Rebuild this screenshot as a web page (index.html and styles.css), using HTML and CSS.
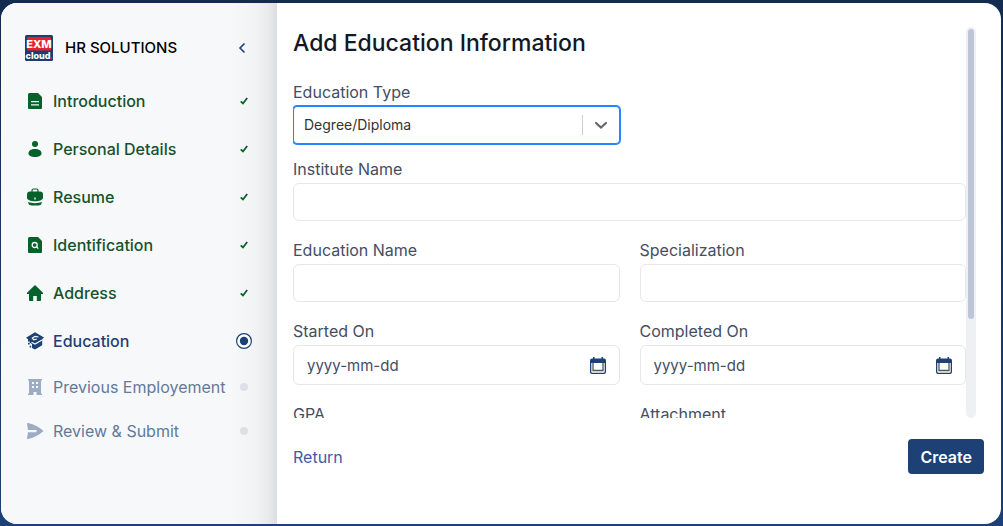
FILE: index.html
```html
<!DOCTYPE html>
<html lang="en">
<head>
  <meta charset="UTF-8">
  <meta name="viewport" content="width=device-width, initial-scale=1.0">
  <title>HR Solutions</title>
  <link rel="stylesheet" href="styles.css">
</head>
<body>
  <div class="card">
    <aside class="sidebar">
      <div class="brand">
        <svg class="logo" viewBox="0 0 28 26" role="img" aria-label="EXM cloud">
          <rect width="28" height="26" rx="1.5" fill="#1d3d6e"/>
          <rect x="2" y="2" width="24" height="13.5" rx="1" fill="#e8202e"/>
          <text x="14" y="13" class="logo-top">EXM</text>
          <text x="13" y="23.5" class="logo-bottom">cloud</text>
          <circle cx="26" cy="23" r="1" fill="#e8202e"/>
        </svg>
        <span class="brand-name">HR SOLUTIONS</span>
        <button class="collapse" type="button" aria-label="Collapse menu">
          <svg width="8" height="12" viewBox="0 0 8 12"><path d="M6.500 1.500 2 6l4.500 4.500" fill="none" stroke="currentColor" stroke-width="1.600"/></svg>
        </button>
      </div>

      <nav class="steps">
        <a class="step done" href="#">
          <svg class="icon" viewBox="0 0 16 16"><path fill="currentColor" fill-rule="evenodd" d="M2.500 0H11l4 4v11a1 1 0 0 1-1 1H2a1 1 0 0 1-1-1V1.500A1.500 1.500 0 0 1 2.500 0ZM4 8v1.300h8V8Zm0 3.200v1.300h8v-1.300Z"/></svg>
          <span>Introduction</span>
          <svg class="check" viewBox="0 0 8 8"><path d="M.8 4.300 3 6.500 7.200 1"/></svg>
        </a>
        <a class="step done" href="#">
          <svg class="icon" viewBox="0 0 16 16"><g fill="currentColor"><circle cx="8" cy="3" r="3"/><path d="M1.500 12.200C1.500 9.600 4.200 8 8 8s6.500 1.600 6.500 4.200S11.800 16 8 16s-6.500-1.200-6.500-3.800Z"/></g></svg>
          <span>Personal Details</span>
          <svg class="check" viewBox="0 0 8 8"><path d="M.8 4.300 3 6.500 7.200 1"/></svg>
        </a>
        <a class="step done" href="#">
          <svg class="icon" viewBox="0 0 16 16"><path d="M5 3V1.500Q5 0 6.500 0h3Q11 0 11 1.500V3" fill="none" stroke="currentColor" stroke-width="1.200"/><path fill="currentColor" fill-rule="evenodd" d="M3 2.500h10a3 3 0 0 1 3 3v3c0 2.500-3.500 3.700-8 3.700S0 11 0 8.500v-3a3 3 0 0 1 3-3Zm4.300 6v2h1.400v-2Z"/><path fill="currentColor" d="M1 13c4 1.500 10 1.500 14 0-.3 2.500-1.500 3.500-4 3.500H5C2.500 16.500 1.300 15.500 1 13Z"/></svg>
          <span>Resume</span>
          <svg class="check" viewBox="0 0 8 8"><path d="M.8 4.300 3 6.500 7.200 1"/></svg>
        </a>
        <a class="step done" href="#">
          <svg class="icon" viewBox="0 0 16 16"><path fill="currentColor" d="M2.500 0H11l4 4v11a1 1 0 0 1-1 1H2a1 1 0 0 1-1-1V1.500A1.500 1.500 0 0 1 2.500 0Z"/><g fill="none" stroke="#f7f8fa" stroke-width="1.300"><circle cx="7.700" cy="8" r="2.500"/><path d="m9.500 9.800 1.800 1.800"/></g></svg>
          <span>Identification</span>
          <svg class="check" viewBox="0 0 8 8"><path d="M.8 4.300 3 6.500 7.200 1"/></svg>
        </a>
        <a class="step done" href="#">
          <svg class="icon" viewBox="0 0 16 16"><path fill="currentColor" d="M8 0 16 7.800V9h-2v6.200a.8.8 0 0 1-.8.8H9.800v-5H6.200v5H2.800a.8.8 0 0 1-.8-.8V9H0V7.800Z"/></svg>
          <span>Address</span>
          <svg class="check" viewBox="0 0 8 8"><path d="M.8 4.300 3 6.500 7.200 1"/></svg>
        </a>
        <a class="step active" href="#" aria-current="step">
          <svg class="icon icon-wide" viewBox="0 0 18 18"><path fill="currentColor" d="M9 .3 18 5.500 16.200 7v6.300L9 17.500 6 16v-4L3.800 10.800V9.500H2V7.200L0 5.800Z"/><path d="M12.500 5 9 4.300 6.300 6.200l1.500 1.600 3-.8M5.500 10.300 9 12l7-4" fill="none" stroke="#f7f8fa" stroke-width="1.200"/><path d="M2 10.800h1.700v1.700H2Zm1.700 3h1.500v1.700H3.700Z" fill="currentColor"/></svg>
          <span>Education</span>
          <svg class="radio" viewBox="0 0 16 16"><circle cx="8" cy="8" r="7.400" fill="#fff" stroke="currentColor" stroke-width="1.200"/><circle cx="8" cy="8" r="4.200" fill="currentColor"/></svg>
        </a>
        <a class="step" href="#">
          <svg class="icon" viewBox="0 0 16 16"><path fill="currentColor" fill-rule="evenodd" d="M1 0h14v1.500h-1v13h1V16H9.500v-3h-3v3H1v-1.500h1v-13H1ZM5 3v2h2V3Zm4 0v2h2V3ZM5 7v2h2V7Zm4 0v2h2V7Z"/></svg>
          <span>Previous Employement</span>
          <i class="dot"></i>
        </a>
        <a class="step" href="#">
          <svg class="icon" viewBox="0 0 16 16"><path fill="currentColor" d="M0 .8Q0-.2 1.200.1 10 2 16.500 8 10 14 1.200 15.900 0 16.200 0 15.200L1 9.200h8.500V7H1Z"/></svg>
          <span>Review &amp; Submit</span>
          <i class="dot"></i>
        </a>
      </nav>
    </aside>

    <form class="panel">
      <div class="scroll-area">
        <div class="scroll">
          <h1>Add Education Information</h1>
          <div class="fields">
            <div class="field field-type">
              <label for="type">Education Type</label>
              <div class="select">
                <select id="type">
                  <option>Degree/Diploma</option>
                  <option>Certificate</option>
                </select>
                <svg class="arrow" width="20" height="20" viewBox="0 0 20 20"><path d="m5 8 5 4.500L15 8" fill="none" stroke="currentColor" stroke-width="2.200" stroke-linecap="round"/></svg>
              </div>
            </div>
            <div class="field wide">
              <label for="institute">Institute Name</label>
              <input id="institute" type="text">
            </div>
            <div class="field">
              <label for="name">Education Name</label>
              <input id="name" type="text">
            </div>
            <div class="field">
              <label for="spec">Specialization</label>
              <input id="spec" type="text">
            </div>
            <div class="field">
              <label for="start">Started On</label>
              <div class="date">
                <input id="start" type="text" placeholder="yyyy-mm-dd">
                <button type="button" aria-label="Pick start date">
                  <svg width="16" height="17" viewBox="0 0 16 17"><path fill="currentColor" fill-rule="evenodd" d="M3 0h1.500v1.500h7V0H13v1.500h1A2 2 0 0 1 16 3.500V15a2 2 0 0 1-2 2H2a2 2 0 0 1-2-2V3.500a2 2 0 0 1 2-2h1ZM1.300 6v8.800q0 .9.900.9h11.600q.9 0 .9-.9V6Z"/><path d="M3 6v7.500h10V6" fill="none" stroke="#555" stroke-width="1.300"/></svg>
                </button>
              </div>
            </div>
            <div class="field">
              <label for="end">Completed On</label>
              <div class="date">
                <input id="end" type="text" placeholder="yyyy-mm-dd">
                <button type="button" aria-label="Pick completion date">
                  <svg width="16" height="17" viewBox="0 0 16 17"><path fill="currentColor" fill-rule="evenodd" d="M3 0h1.500v1.500h7V0H13v1.500h1A2 2 0 0 1 16 3.500V15a2 2 0 0 1-2 2H2a2 2 0 0 1-2-2V3.500a2 2 0 0 1 2-2h1ZM1.300 6v8.800q0 .9.900.9h11.600q.9 0 .9-.9V6Z"/><path d="M3 6v7.500h10V6" fill="none" stroke="#555" stroke-width="1.300"/></svg>
                </button>
              </div>
            </div>
            <div class="field">
              <label for="gpa">GPA</label>
              <input id="gpa" type="text">
            </div>
            <div class="field">
              <label for="file">Attachment</label>
              <input id="file" type="file">
            </div>
          </div>
        </div>
        <div class="track"><div class="thumb"></div></div>
      </div>
      <div class="actions">
        <a class="return" href="#">Return</a>
        <button class="create" type="submit">Create</button>
      </div>
    </form>
  </div>
</body>
</html>
```

FILE: styles.css
```css
* {
  box-sizing: border-box;
}

body {
  margin: 0;
  height: 100vh;
  padding: 3px 2px 2px 1px;
  background: linear-gradient(#132b4f, #1d4075);
  font-family: Inter, "Liberation Sans", sans-serif;
  font-size: 16px;
  line-height: 24px;
}

a {
  color: inherit;
  text-decoration: none;
}

button {
  border: 0;
  padding: 0;
  background: none;
  font: inherit;
  cursor: pointer;
}

.card {
  display: flex;
  height: 100%;
  overflow: hidden;
  background: #fff;
  border-radius: 16px;
}

/* sidebar */
.sidebar {
  flex: none;
  width: 276px;
  padding: 32px 25px 0 24px;
  background: linear-gradient(to left, #dcdde0, #e8e9eb 8px, #f1f2f4 20px, #f7f8fa 46px);
}

.brand {
  display: flex;
  align-items: center;
  height: 26px;
  margin-bottom: 16px;
}

.logo {
  width: 28px;
  height: 26px;
  margin-right: 12px;
}

.logo text {
  fill: #fff;
  font-weight: 800;
  text-anchor: middle;
}

.logo-top {
  font-size: 11px;
}

.logo-bottom {
  font-size: 9px;
}

.brand-name {
  font-size: 15px;
  font-weight: 500;
  color: #000;
}

.collapse {
  display: flex;
  margin-left: auto;
  padding: 4px 6px;
  color: #1d4075;
}

.step {
  display: flex;
  align-items: center;
  gap: 8px;
  height: 44px;
  color: #64789b;
}

.step span {
  flex: 1;
  white-space: nowrap;
}

.icon {
  width: 16px;
  height: 16px;
  margin: 0 2px;
  overflow: visible;
  color: #9dabc3;
}

.icon-wide {
  width: 18px;
  height: 18px;
  margin: 0 1px;
}

.done,
.active {
  height: 48px;
  font-weight: 500;
}

.done {
  color: #14532d;
}

.done .icon {
  color: #06612a;
}

.active,
.active .icon {
  color: #1d4075;
}

.check {
  width: 8px;
  height: 8px;
  margin: 0 4px;
  fill: none;
  stroke: #06612a;
  stroke-width: 1.8;
}

.radio {
  width: 16px;
  height: 16px;
}

.dot {
  width: 8px;
  height: 8px;
  margin: 0 4px;
  border-radius: 50%;
  background: #dde1e7;
}

/* form */
.panel {
  flex: 1;
  display: flex;
  flex-direction: column;
  min-width: 0;
  padding: 24px 17px 50px 16px;
}

.scroll-area {
  flex: 1;
  display: flex;
  min-height: 0;
  margin-right: 8px;
}

.scroll {
  flex: 1;
  min-width: 0;
  padding-bottom: 54px;
  overflow-y: scroll;
  scrollbar-width: none;
}

.track {
  width: 10px;
  padding: 2px;
  border-radius: 5px;
  background: #eff0f4;
}

.thumb {
  height: 75%;
  border-radius: 3px;
  background: #bcc6d6;
}

h1 {
  margin: 0 0 21px;
  font-size: 23px;
  font-weight: 500;
  line-height: 32px;
  color: #111827;
}

.fields {
  display: grid;
  grid-template-columns: 1fr 1fr;
  column-gap: 20px;
}

.field {
  display: flex;
  flex-direction: column;
  gap: 2px;
  margin-bottom: 17px;
  color: #434e63;
}

.field-type {
  grid-column: 1;
  margin-bottom: 13px;
}

.wide {
  grid-column: 1 / -1;
}

input,
select {
  width: 100%;
  height: 38px;
  padding: 0 13px;
  border: 1px solid #e5e7eb;
  border-radius: 6px;
  background: #fff;
  font: inherit;
  font-size: 14px;
  color: #434e63;
}

input[type="file"] {
  padding-top: 7px;
}

.select {
  position: relative;
}

select {
  display: block;
  appearance: none;
  padding: 0 10px;
  border-color: #2684ff;
  border-radius: 4px;
  box-shadow: 0 0 0 1px #2684ff;
  outline: none;
  color: #333;
}

.arrow {
  position: absolute;
  top: 9px;
  right: 9px;
  color: #666;
  pointer-events: none;
}

.select::after {
  content: "";
  position: absolute;
  top: 9px;
  bottom: 9px;
  right: 37px;
  width: 1px;
  background: #ccc;
}

.date {
  display: flex;
  align-items: center;
  height: 40px;
  padding-right: 13px;
  border: 1px solid #e5e7eb;
  border-radius: 6px;
}

.date input {
  flex: 1;
  min-width: 0;
  border: 0;
  background: none;
  font-size: 15px;
}

.date input::placeholder {
  color: #434e63;
  opacity: 1;
}

.date button {
  display: flex;
  color: #1d4075;
}

.actions {
  display: flex;
  justify-content: space-between;
  align-items: center;
  margin-top: 21px;
}

.return {
  color: #3b5ba9;
}

.create {
  height: 35px;
  padding: 0 12px;
  border-radius: 4px;
  background: #1d4075;
  font-weight: 600;
  color: #fff;
}
```
